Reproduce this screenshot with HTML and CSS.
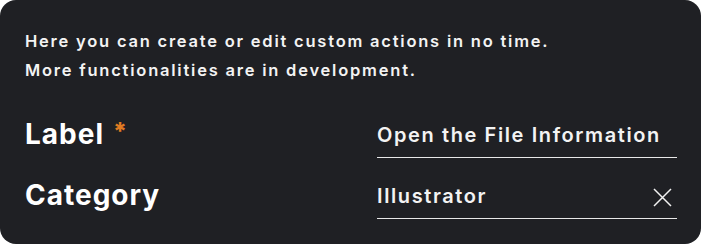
FILE: index.html
```html
<!DOCTYPE html>
<html>
<head>
<meta charset="utf-8">
<link rel="stylesheet" href="styles.css">
</head>
<body>
<div class="panel">
  <p class="intro">Here you can create or edit custom actions in no time.<br>More functionalities are in development.</p>
  <div class="form">
    <div class="row">
      <div class="label">Label<span class="req">*</span></div>
      <div class="field"><span class="value">Open the File Information</span></div>
    </div>
    <div class="row">
      <div class="label">Category</div>
      <div class="field">
        <span class="value">Illustrator</span>
        <svg class="clear" width="19" height="19" viewBox="0 0 19 19"><path d="M1 1L18 18M18 1L1 18" stroke="#f2f2f2" stroke-width="1.5" fill="none"/></svg>
      </div>
    </div>
  </div>
</div>
</body>
</html>
```

FILE: styles.css
```css
html, body {
  margin: 0;
  padding: 0;
  background: #ffffff;
}
.panel {
  box-sizing: border-box;
  width: 701px;
  height: 244px;
  background: #1f2024;
  border-radius: 16px;
  padding: 26.5px 24px 0 25px;
  color: #f3f3f3;
  font-family: Inter, "Noto Sans", sans-serif;
}
.intro {
  margin: 0;
  font-size: 16.5px;
  line-height: 29px;
  font-weight: 600;
  letter-spacing: 1.78px;
}
.form {
  margin-top: 32.5px;
  display: flex;
  flex-direction: column;
  gap: 20px;
}
.row {
  display: flex;
  justify-content: space-between;
  align-items: flex-end;
}
.label {
  font-size: 28px;
  line-height: 34px;
  font-weight: 700;
  letter-spacing: 1px;
  margin-bottom: 7px;
  color: #ffffff;
}
.req {
  display: inline-block;
  margin-left: 9px;
  color: #e07b22;
  font-size: 24px;
  font-weight: 800;
  line-height: 1;
  vertical-align: 4px;
}
.field {
  box-sizing: border-box;
  width: 300px;
  height: 35px;
  padding-bottom: 10px;
  border-bottom: 1px solid #e8e8e8;
  display: flex;
  justify-content: space-between;
  align-items: center;
}
.value {
  font-size: 20px;
  line-height: 24px;
  font-weight: 600;
  letter-spacing: 1.6px;
}
.clear {
  margin-right: 5px;
  margin-top: 2px;
}
```
